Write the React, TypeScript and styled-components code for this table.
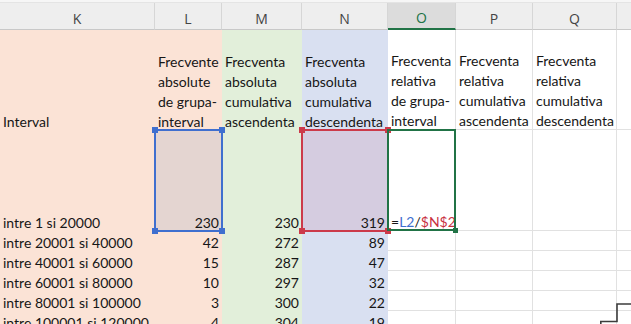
import React from 'react';
import styled, { createGlobalStyle } from 'styled-components';

const GlobalStyle = createGlobalStyle`
  html, body {
    margin: 0;
    padding: 0;
    background: #ffffff;
    overflow: hidden;
  }
`;

const PEACH = '#fbe3d6';
const GREEN = '#e2efda';
const BLUE = '#d9e0f1';
const GRID = '#e1e1e1';

const COLS = ['K', 'L', 'M', 'N', 'O', 'P', 'Q', ''];
const FILLS = [PEACH, PEACH, GREEN, BLUE, '', '', '', ''];

const Page = styled.div`
  position: relative;
  width: 631px;
  height: 324px;
  overflow: hidden;
  font-family: Lato, 'Liberation Sans', sans-serif;
  font-size: 14px;
  color: #161616;
`;

const TopStrip = styled.div`
  height: 3px;
  background: #f6f6f6;
  border-bottom: 1px solid #e4e4e4;
  box-sizing: border-box;
`;

const Sheet = styled.div`
  display: grid;
  grid-template-columns: 155px 67px 80px 86px 68px 77px 84px 60px;
  grid-template-rows: 27px 100px 101px repeat(5, 20px);
`;

const ColHead = styled.div<{ $active?: boolean }>`
  display: flex;
  align-items: flex-end;
  justify-content: center;
  padding-bottom: 1px;
  box-sizing: border-box;
  background: ${(p) => (p.$active ? '#dcdcdc' : '#eeeeee')};
  border-right: 1px solid #d6d6d6;
  border-bottom: ${(p) => (p.$active ? '2px solid #217346' : '1px solid #c8c8c8')};
  font-family: 'Open Sans', 'Noto Sans', sans-serif;
  font-size: 14px;
  color: ${(p) => (p.$active ? '#217346' : '#444444')};
`;

const Cell = styled.div<{ $fill: string; $right?: boolean }>`
  position: relative;
  display: flex;
  flex-direction: column;
  justify-content: flex-end;
  align-items: ${(p) => (p.$right ? 'flex-end' : 'flex-start')};
  padding: 0 3px 0 3px;
  box-sizing: border-box;
  background: ${(p) => p.$fill || '#ffffff'};
  border-right: ${(p) => (p.$fill ? 'none' : `1px solid ${GRID}`)};
  border-bottom: ${(p) => (p.$fill ? 'none' : `1px solid ${GRID}`)};
  white-space: nowrap;
`;

const Line = styled.span`
  position: relative;
  display: block;
  height: 20px;
  line-height: 24px;
`;

const Shade = styled.div<{ $tint: string }>`
  position: absolute;
  inset: 0;
  background: ${(p) => p.$tint};
`;

const Selection = styled.div<{ $color: string }>`
  position: absolute;
  left: -1px;
  top: -1px;
  right: -1px;
  bottom: -1px;
  border: 2px solid ${(p) => p.$color};
  pointer-events: none;
  z-index: 2;
`;

const Handle = styled.div<{ $color: string; $x: 'left' | 'right'; $y: 'top' | 'bottom'; $size?: number }>`
  position: absolute;
  width: ${(p) => p.$size ?? 6}px;
  height: ${(p) => p.$size ?? 6}px;
  background: ${(p) => p.$color};
  ${(p) => p.$x}: -${(p) => ((p.$size ?? 6) + 2) / 2}px;
  ${(p) => p.$y}: -${(p) => ((p.$size ?? 6) + 2) / 2}px;
  z-index: 3;
`;

const Ref = styled.span<{ $color: string }>`
  color: ${(p) => p.$color};
`;

const Corner = styled.svg`
  position: absolute;
  right: 0;
  bottom: 0;
`;

const headers: string[][] = [
  ['Interval'],
  ['Frecvente', 'absolute', 'de grupa-', 'interval'],
  ['Frecventa', 'absoluta', 'cumulativa', 'ascendenta'],
  ['Frecventa', 'absoluta', 'cumulativa', 'descendenta'],
  ['Frecventa', 'relativa', 'de grupa-', 'interval'],
  ['Frecventa', 'relativa', 'cumulativa', 'ascendenta'],
  ['Frecventa', 'relativa', 'cumulativa', 'descendenta'],
  [],
];

const rows = [
  ['intre 1 si 20000', 230, 230, 319],
  ['intre 20001 si 40000', 42, 272, 89],
  ['intre 40001 si 60000', 15, 287, 47],
  ['intre 60001 si 80000', 10, 297, 32],
  ['intre 80001 si 100000', 3, 300, 22],
  ['intre 100001 si 120000', 4, 304, 19],
];

const BLUE_SEL = '#3f6fcf';
const RED_SEL = '#cc3a4a';
const GREEN_SEL = '#217346';

const corners: Array<['left' | 'right', 'top' | 'bottom']> = [
  ['left', 'top'],
  ['right', 'top'],
  ['left', 'bottom'],
  ['right', 'bottom'],
];

export default function App() {
  return (
    <Page>
      <GlobalStyle />
      <TopStrip />
      <Sheet>
        {COLS.map((c, i) => (
          <ColHead key={`h${i}`} $active={c === 'O'}>
            {c}
          </ColHead>
        ))}

        {headers.map((lines, i) => (
          <Cell key={`t${i}`} $fill={FILLS[i]}>
            {lines.map((l, j) => (
              <Line key={j}>{l}</Line>
            ))}
          </Cell>
        ))}

        {rows.map((r, ri) =>
          COLS.map((_, ci) => {
            const key = `r${ri}c${ci}`;
            const value = ci < 4 ? r[ci] : '';
            if (ri === 0 && ci === 1) {
              return (
                <Cell key={key} $fill={FILLS[ci]} $right>
                  <Shade $tint="#e4d5d1" />
                  <Line>{value}</Line>
                  <Selection $color={BLUE_SEL}>
                    {corners.map(([x, y]) => (
                      <Handle key={x + y} $color={BLUE_SEL} $x={x} $y={y} />
                    ))}
                  </Selection>
                </Cell>
              );
            }
            if (ri === 0 && ci === 3) {
              return (
                <Cell key={key} $fill={FILLS[ci]} $right>
                  <Shade $tint="#d5cce0" />
                  <Line>{value}</Line>
                  <Selection $color={RED_SEL}>
                    {corners.map(([x, y]) => (
                      <Handle key={x + y} $color={RED_SEL} $x={x} $y={y} />
                    ))}
                  </Selection>
                </Cell>
              );
            }
            if (ri === 0 && ci === 4) {
              return (
                <Cell key={key} $fill="">
                  <Line>
                    =<Ref $color="#3f6fcf">L2</Ref>/<Ref $color="#c8313f">$N$2</Ref>
                  </Line>
                  <Selection $color={GREEN_SEL}>
                    <Handle $color={GREEN_SEL} $x="right" $y="bottom" $size={5} />
                  </Selection>
                </Cell>
              );
            }
            return (
              <Cell key={key} $fill={FILLS[ci]} $right={ci > 0}>
                {value !== '' && <Line>{value}</Line>}
              </Cell>
            );
          })
        )}
      </Sheet>
      <Corner width="31" height="21" viewBox="0 0 31 21">
        <path d="M31 1 H17 V18.5 H0.8 V21" fill="none" stroke="#3c3c3c" strokeWidth="1.6" />
      </Corner>
    </Page>
  );
}
